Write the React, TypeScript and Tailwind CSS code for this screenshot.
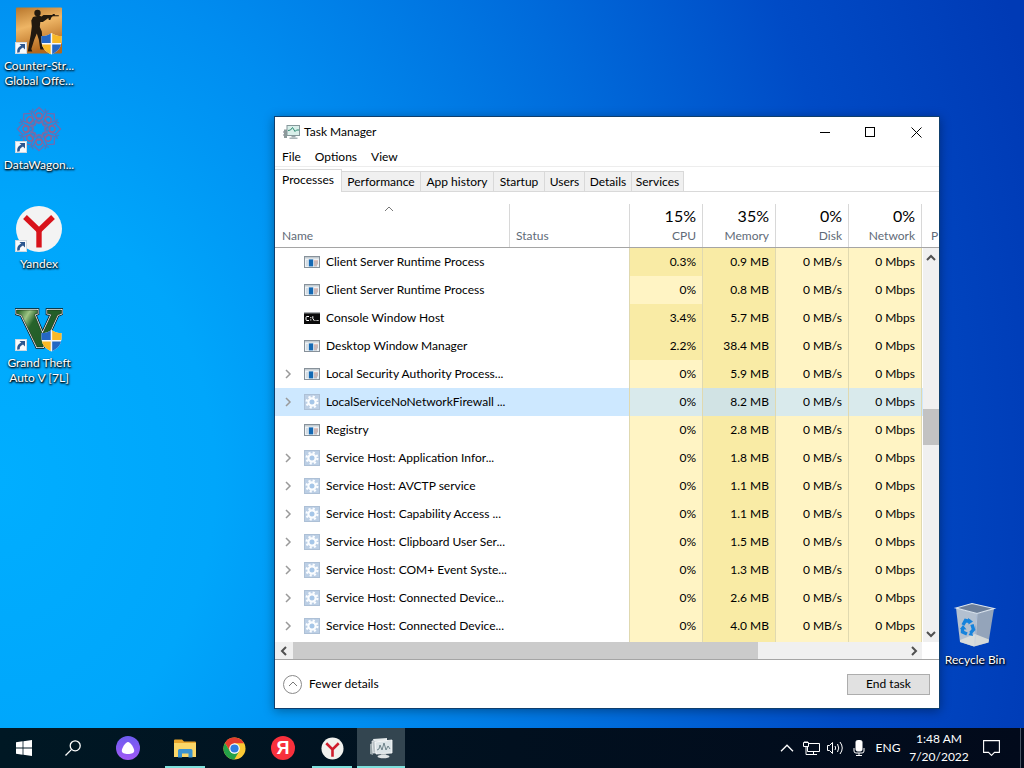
import React from "react";

type IconKind = "app" | "console" | "service";

interface Row {
  name: string;
  icon: IconKind;
  group?: boolean;
  cpu: string;
  memory: string;
  selected?: boolean;
}

const rows: Row[] = [
  { name: "Client Server Runtime Process", icon: "app", cpu: "0.3%", memory: "0.9 MB" },
  { name: "Client Server Runtime Process", icon: "app", cpu: "0%", memory: "0.8 MB" },
  { name: "Console Window Host", icon: "console", cpu: "3.4%", memory: "5.7 MB" },
  { name: "Desktop Window Manager", icon: "app", cpu: "2.2%", memory: "38.4 MB" },
  { name: "Local Security Authority Process...", icon: "app", group: true, cpu: "0%", memory: "5.9 MB" },
  { name: "LocalServiceNoNetworkFirewall ...", icon: "service", group: true, cpu: "0%", memory: "8.2 MB", selected: true },
  { name: "Registry", icon: "app", cpu: "0%", memory: "2.8 MB" },
  { name: "Service Host: Application Infor...", icon: "service", group: true, cpu: "0%", memory: "1.8 MB" },
  { name: "Service Host: AVCTP service", icon: "service", group: true, cpu: "0%", memory: "1.1 MB" },
  { name: "Service Host: Capability Access ...", icon: "service", group: true, cpu: "0%", memory: "1.1 MB" },
  { name: "Service Host: Clipboard User Ser...", icon: "service", group: true, cpu: "0%", memory: "1.5 MB" },
  { name: "Service Host: COM+ Event Syste...", icon: "service", group: true, cpu: "0%", memory: "1.3 MB" },
  { name: "Service Host: Connected Device...", icon: "service", group: true, cpu: "0%", memory: "2.6 MB" },
  { name: "Service Host: Connected Device...", icon: "service", group: true, cpu: "0%", memory: "4.0 MB" },
];

const usage = [
  { label: "CPU", total: "15%" },
  { label: "Memory", total: "35%" },
  { label: "Disk", total: "0%" },
  { label: "Network", total: "0%" },
];

const tabs = [
  { label: "Performance", width: "w-[79px]" },
  { label: "App history", width: "w-[73px]" },
  { label: "Startup", width: "w-[51px]" },
  { label: "Users", width: "w-[40px]" },
  { label: "Details", width: "w-[47px]" },
  { label: "Services", width: "w-[52px]" },
];

function Chevron({ dir, className }: { dir: "up" | "down" | "left" | "right"; className?: string }) {
  const d = {
    up: "M1 7 L5 3 L9 7",
    down: "M1 3 L5 7 L9 3",
    left: "M7 1 L3 5 L7 9",
    right: "M3 1 L7 5 L3 9",
  }[dir];
  return (
    <svg viewBox="0 0 10 10" className={className} fill="none" stroke="currentColor" aria-hidden="true">
      <path d={d} />
    </svg>
  );
}

function ProcessIcon({ kind }: { kind: IconKind }) {
  if (kind === "app")
    return (
      <svg viewBox="0 0 16 14" className="h-[14px] w-4 shrink-0" aria-hidden="true">
        <rect x="0.5" y="1.5" width="15" height="11" fill="#eef2f5" stroke="#87919a" />
        <rect x="1" y="2" width="14" height="1.5" fill="#c3cbd1" />
        <rect x="2" y="5" width="2" height="6" fill="#d5dde4" />
        <rect x="4.8" y="4.4" width="4.4" height="7" fill="#1469b3" />
        <path d="M10 6h4M10 8h4M10 10h3" stroke="#d58a7d" strokeWidth="0.9" />
        <path d="M10 7h4M10 9h4M10 11h3" stroke="#8fa0ac" strokeWidth="0.6" />
      </svg>
    );
  if (kind === "console")
    return (
      <svg viewBox="0 0 16 14" className="h-[14px] w-4 shrink-0" aria-hidden="true">
        <rect x="0" y="1" width="16" height="12" fill="#0a0a0a" />
        <rect x="0" y="1" width="16" height="1.4" fill="#a9acaf" />
        <path
          d="M5 5.500H3Q2 5.500 2 6.500V8.500Q2 9.500 3 9.500H5M6.800 6v1.200M6.800 8.300v1.200M8.800 5.200v2.300l1.600 2.400M11.600 9.500h.9M13.300 9.500h1.200"
          fill="none"
          stroke="#fff"
          strokeWidth="1"
        />
      </svg>
    );
  return (
    <svg viewBox="0 0 16 16" className="size-4 shrink-0" aria-hidden="true">
      <rect width="16" height="16" fill="#bccfe5" />
      <rect x="0.5" y="0.5" width="15" height="15" fill="none" stroke="#adc0d6" />
      <circle cx="8" cy="8" r="5.400" fill="none" stroke="#fbfdff" strokeWidth="2.200" strokeDasharray="2.120 2.120" />
      <circle cx="8" cy="8" r="3.600" fill="none" stroke="#fbfdff" strokeWidth="2.200" />
      <circle cx="8" cy="8" r="2.300" fill="#a5c6e8" />
    </svg>
  );
}

function TaskManagerIcon({ className }: { className: string }) {
  return (
    <svg viewBox="0 0 17 16" className={className} aria-hidden="true">
      <path d="M1 5.500h3V14H1z" fill="#8d9a9b" />
      <path d="M0 8h1M0 11h1" stroke="#778" />
      <rect x="4" y="1.500" width="12.500" height="10" fill="#d9efea" stroke="#86989b" />
      <path d="M5 6.500l2.500-.5 2-2.500 2.500 4 1.500-1.500h2.500" fill="none" stroke="#2f8a72" strokeWidth="1" />
      <path d="M8.500 12h4v1.500h-4z" fill="#9aa7aa" />
      <path d="M6.500 13.500h8v1.500h-8z" fill="#a9b4b8" />
    </svg>
  );
}

function Shield() {
  return (
    <g transform="translate(26,26)">
      <clipPath id="shield-clip">
        <path d="M10.500 0C14 2.500 17 3 20.500 3V8C20.500 15 16 19 10.500 21.500C5 19 .5 15 .5 8V3C4 3 7 2.500 10.500 0z" />
      </clipPath>
      <g clipPath="url(#shield-clip)">
        <rect width="21" height="22" fill="#f5f7fa" />
        <rect width="9.700" height="10" fill="#2467c4" />
        <rect x="11.200" width="10" height="10" fill="#f9b926" />
        <rect y="11.500" width="9.700" height="11" fill="#f9b926" />
        <rect x="11.200" y="11.500" width="10" height="11" fill="#2467c4" />
      </g>
    </g>
  );
}

function ShortcutArrow() {
  return (
    <g>
      <rect x="0.500" y="35.500" width="11" height="11" fill="#f8fafc" stroke="#cfd8e0" />
      <path d="M3.500 45.500C3 42 4.500 40.500 7.500 39.500" fill="none" stroke="#2b568f" strokeWidth="2.600" />
      <path d="M4.500 37h5.500v5.500z" fill="#2b568f" />
    </g>
  );
}

function CounterStrikeIcon() {
  return (
    <svg viewBox="0 0 48 48" className="size-12" aria-hidden="true">
      <defs>
        <linearGradient id="csgo" x1="0" y1="0" x2="0.3" y2="1">
          <stop offset="0" stopColor="#b7762c" />
          <stop offset="0.450" stopColor="#eeb565" />
          <stop offset="1" stopColor="#b3681d" />
        </linearGradient>
      </defs>
      <rect x="1" y="0.500" width="46" height="46" rx="1" fill="url(#csgo)" />
      <circle cx="22.500" cy="6" r="3.200" fill="#21190f" />
      <path
        d="M18 10l6-1.500 2.500 1 2-1.500h9l.3-1h2v1.200h4v1.100h-6l-1.500 1.300-1 2.500h-1.500l-.5-2-2 1.500-3.500 2.500h-2.500l-.5 5 2 4.500.5 7 1 8.500 2 2.400h-5l-1.500-10-2-6-2.500 6-3 9.500 1 2.500h-4.500l1.500-9 1.500-8 1-8-.5-6z"
        fill="#21190f"
      />
      <Shield />
      <ShortcutArrow />
    </svg>
  );
}

function DataWagonIcon() {
  const turns = [0, 45, 90, 135, 180, 225, 270, 315];
  return (
    <svg viewBox="0 0 48 48" className="size-12" aria-hidden="true">
      <g fill="none" strokeWidth="1.300" opacity="0.850">
        {turns.map((a) => (
          <g key={a} transform={`rotate(${a} 24 23)`}>
            <path d="M24 1.500L18.500 6.500L21 12H27L29.500 6.500z" stroke="#8862a0" />
            <path d="M18.500 6.500L14 4.500M29.500 6.500L34 4.500M21 12L24 17L27 12" stroke="#5b72b4" />
            <circle cx="24" cy="10" r="3" stroke="#b0587c" />
            <path d="M20 14.500Q24 20 28 14.500" stroke="#9a5f92" />
          </g>
        ))}
      </g>
      <ShortcutArrow />
    </svg>
  );
}

function YandexDesktopIcon() {
  return (
    <svg viewBox="0 0 48 48" className="size-12" aria-hidden="true">
      <circle cx="24" cy="24" r="23" fill="#f3f3f3" />
      <path d="M10 12L24 25.500L38 12" fill="none" stroke="#d8131b" strokeWidth="5.400" />
      <path d="M24 24V42.500" stroke="#d8131b" strokeWidth="5.400" />
      <ShortcutArrow />
    </svg>
  );
}

const gtaShape = "M1.500 6H22.500V9.500L19.500 10.500L27.500 30L36.500 10.500L32.500 9.500V6H46.500V9.500L42.500 11L28 43H22L6.500 11L1.500 9.500z";

function GtaIcon() {
  return (
    <svg viewBox="0 0 48 48" className="size-12" aria-hidden="true">
      <defs>
        <linearGradient id="gta" x1="0" y1="0" x2="1" y2="0.5">
          <stop offset="0.050" stopColor="#2e6a2c" />
          <stop offset="0.250" stopColor="#9ec584" />
          <stop offset="0.420" stopColor="#27632b" />
          <stop offset="1" stopColor="#1f5a26" />
        </linearGradient>
      </defs>
      <path d={gtaShape} fill="none" stroke="#10160f" strokeWidth="3.600" />
      <path d={gtaShape} fill="none" stroke="#fff" strokeWidth="2" />
      <path d={gtaShape} fill="url(#gta)" stroke="#132413" strokeWidth="0.600" />
      <Shield />
      <ShortcutArrow />
    </svg>
  );
}

function RecycleIcon() {
  return (
    <svg viewBox="0 0 48 48" className="size-12" aria-hidden="true">
      <path d="M5 7L26 12.500L23 45.500L9 41z" fill="#b3c0d0" />
      <path d="M26 12.500L43 7.500L37.500 41.500L23 45.500z" fill="#94a4ba" />
      <path d="M5 7L21 2.500L43 7.500L26 12.500z" fill="#6d7f99" stroke="#dde5ed" strokeWidth="1.200" />
      <path d="M9 39L24 33L38 38.500L37.500 41.500L23 45.500L9 41z" fill="#dcdfdc" opacity="0.9" />
      <path d="M26 12.500L24 45" stroke="#c9d3df" strokeWidth="0.800" />
      <g fill="none" stroke="#1683dc" strokeWidth="3.400">
        <path d="M12 24L14.500 19.500L19 20.500" />
        <path d="M21 23.500L22.500 28.500L19.500 32" />
        <path d="M16 33L11.500 31L11.500 27" />
      </g>
      <path d="M17 17l5 3.500-4.500 3zM22 35l-4.500-1 3-4.500zM9 28l3-4 3.500 4.500z" fill="#1683dc" />
    </svg>
  );
}

function DesktopIcon({ icon, lines }: { icon: React.ReactNode; lines: string[] }) {
  return (
    <a
      href="#"
      className="flex h-[99px] w-[78px] flex-col items-center text-center text-xs leading-[15px] whitespace-nowrap text-white [text-shadow:0_1px_2px_#000,1px_1px_2px_#000]"
    >
      {icon}
      <span className="pt-[3px]">
        {lines.map((l) => (
          <span key={l} className="block">
            {l}
          </span>
        ))}
      </span>
    </a>
  );
}

function TaskButton({
  label,
  open,
  active,
  children,
}: {
  label: string;
  open?: boolean;
  active?: boolean;
  children: React.ReactNode;
}) {
  return (
    <button
      type="button"
      aria-label={label}
      className={`relative flex h-10 w-12 items-center justify-center ${active ? "bg-[#334550]" : ""}`}
    >
      {children}
      {open && <span className={`absolute bottom-0 h-0.5 bg-[#7ee0dc] ${active ? "inset-x-0" : "inset-x-1"}`} />}
    </button>
  );
}

function Taskbar() {
  return (
    <footer className="flex h-10 shrink-0 items-center justify-between bg-linear-to-r from-[#001824] via-[#01101f] to-[#020a1b] text-white">
      <nav className="flex items-center gap-px" aria-label="Taskbar">
        <TaskButton label="Start">
          <svg viewBox="0 0 16 16" className="size-4" fill="#fff" aria-hidden="true">
            <path d="M0 2.200L6.600 1.300V7.600H0zM7.400 1.200L16 0V7.600H7.400zM0 8.400H6.600V14.700L0 13.800zM7.400 8.400H16V16L7.400 14.800z" />
          </svg>
        </TaskButton>
        <TaskButton label="Search">
          <svg viewBox="0 0 16 16" className="size-4" fill="none" stroke="#fff" strokeWidth="1.300" aria-hidden="true">
            <circle cx="10.200" cy="5.800" r="5" />
            <path d="M6.600 9.400L0.500 15.500" />
          </svg>
        </TaskButton>
        <span className="w-[5px]" />
        <TaskButton label="Alice">
          <svg viewBox="0 0 24 24" className="size-6" aria-hidden="true">
            <defs>
              <linearGradient id="alice" x1="0" y1="0" x2="0" y2="1">
                <stop offset="0" stopColor="#6c5cf0" />
                <stop offset="1" stopColor="#a159f5" />
              </linearGradient>
            </defs>
            <circle cx="12" cy="12" r="12" fill="url(#alice)" />
            <path d="M12 6c-2.300 0-6.200 6-6.200 8.800C5.800 17 8.500 18 12 18s6.200-1 6.200-3.200C18.200 12 14.300 6 12 6z" fill="#fff" />
          </svg>
        </TaskButton>
        <span className="w-[7px]" />
        <TaskButton label="File Explorer" open>
          <svg viewBox="0 0 22 19" className="h-[19px] w-[22px]" aria-hidden="true">
            <path d="M0 1.500Q0 .5 1 .5H8L10 2.500H21Q22 2.500 22 3.500V18H0z" fill="#e8a52c" />
            <path d="M0 4H22V18H0z" fill="#fbd768" />
            <path d="M4 11.500Q4 10 5.500 10H17Q18.500 10 18.500 11.500V18.500H14.500V14.500H8V18.500H4z" fill="#3b93cf" />
          </svg>
        </TaskButton>
        <TaskButton label="Google Chrome">
          <svg viewBox="0 0 24 24" className="size-[23px]" aria-hidden="true">
            <circle cx="12" cy="12" r="11.500" fill="#fcc934" />
            <path d="M2.040 6.250A11.500 11.500 0 0 1 21.960 6.500H12L7.200 14.700z" fill="#e33b2e" />
            <path d="M2.040 6.250L7.240 14.750L12 17.500L16.760 14.750L11.800 23.500A11.500 11.500 0 0 1 2.040 6.250z" fill="#24a148" />
            <circle cx="12" cy="12" r="5.500" fill="#fff" />
            <circle cx="12" cy="12" r="4.300" fill="#2f7de1" />
          </svg>
        </TaskButton>
        <TaskButton label="Yandex">
          <span className="flex size-6 items-center justify-center rounded-full bg-[#f8303c] font-['Liberation_Sans',sans-serif] text-lg leading-6 font-bold">
            Я
          </span>
        </TaskButton>
        <TaskButton label="Yandex Browser" open>
          <svg viewBox="0 0 24 24" className="size-[23px]" aria-hidden="true">
            <circle cx="12" cy="12" r="11.500" fill="#f1f1ee" />
            <path d="M5.500 6.500L12 13L18.500 6.500M12 12V20.500" fill="none" stroke="#cf1c2c" strokeWidth="2.700" />
          </svg>
        </TaskButton>
        <TaskButton label="Task Manager" open active>
          <svg viewBox="0 0 24 22" className="h-[22px] w-6" aria-hidden="true">
            <path d="M1 7l3-1v12l-3-1z" fill="#9aa6aa" />
            <path d="M4 2l14-1v3l-13 1z" fill="#e1e6e8" />
            <path d="M3 4l15-1v12l-14 1z" fill="#b8c1c5" stroke="#edf1f2" strokeWidth="0.800" />
            <path d="M6 5l17-2v13l-16 1z" fill="#dce4e7" stroke="#fff" strokeWidth="0.800" />
            <path d="M8 13l2-1 1-4 2 5 2-7 2 7 2-4 2 3" fill="none" stroke="#61777f" strokeWidth="0.900" />
            <path d="M12 17h5l1 2h-7z" fill="#aab3b6" />
            <ellipse cx="14.500" cy="19.500" rx="6" ry="1.800" fill="#e0e4e5" />
          </svg>
        </TaskButton>
      </nav>
      <div className="flex h-full items-center text-xs">
        <button type="button" aria-label="Show hidden icons" className="flex w-6 justify-center">
          <svg viewBox="0 0 14 8" className="h-2 w-[14px]" fill="none" stroke="#fff" strokeWidth="1.300" aria-hidden="true">
            <path d="M1 7.200L7 1.200L13 7.200" />
          </svg>
        </button>
        <button type="button" aria-label="Network" className="flex w-6 justify-center">
          <svg viewBox="0 0 17 15" className="h-[15px] w-[17px]" fill="none" stroke="#fff" aria-hidden="true">
            <path d="M5.500 2.500H16.500V10.500H4.500V6M10.500 10.500V13.500M7 13.500H14" />
            <path d="M.5 1.500H5.500V5.500H.5zM2 0V1.500M4 0V1.500M3 5.500V13.500H7" />
          </svg>
        </button>
        <button type="button" aria-label="Volume" className="flex w-6 justify-center">
          <svg viewBox="0 0 17 14" className="h-[14px] w-[17px]" fill="none" stroke="#fff" aria-hidden="true">
            <path d="M.5 4.500H2.500L5.500 1.500V12.500L2.500 9.500H.5z" />
            <path d="M8 5Q9.300 7 8 9M10.500 3Q13 7 10.500 11M13 1Q17.500 7 13 13" />
          </svg>
        </button>
        <button type="button" aria-label="Microphone" className="flex w-6 justify-center">
          <svg viewBox="0 0 12 16" className="h-4 w-3" fill="none" stroke="#fff" aria-hidden="true">
            <rect x="3" y="0.500" width="6" height="10.500" rx="1.500" fill="#fff" />
            <path d="M1 8V11Q1 13 3 13H9Q11 13 11 11V8M6 13V15.500M3 15.500H9" />
          </svg>
        </button>
        <button type="button" className="w-[34px] text-center">
          ENG
        </button>
        <button type="button" className="w-[68px] text-center leading-[18px]">
          <span className="block">1:48 AM</span>
          <span className="block">7/20/2022</span>
        </button>
        <button type="button" aria-label="Notifications" className="flex w-9 justify-center">
          <svg viewBox="0 0 17 16" className="h-4 w-[17px]" fill="none" stroke="#fff" strokeWidth="1.100" aria-hidden="true">
            <path d="M.6 .6H16.400V12.400H11.500L8.500 15.400L5.500 12.400H.6z" />
          </svg>
        </button>
        <button type="button" aria-label="Show desktop" className="ml-[11px] h-full w-1 border-l border-[#4a5563]" />
      </div>
    </footer>
  );
}

function ProcessTable() {
  const headCell = "border-b border-[#a5a5a5] p-0 align-bottom font-normal";
  const rule = "border-r border-[#d8d8d8]";
  const heat = "border-r border-[#e0d9b0] p-0";
  return (
    <table className="w-full table-fixed border-separate border-spacing-0">
      <colgroup>
        <col className="w-[235px]" />
        <col className="w-[120px]" />
        <col className="w-[73px]" />
        <col className="w-[73px]" />
        <col className="w-[73px]" />
        <col className="w-[73px]" />
        <col />
      </colgroup>
      <thead>
        <tr className="h-14 text-[#5f6b78]">
          <th className={`text-left ${headCell}`}>
            <div className={`flex h-[43px] flex-col justify-between pb-0.5 pl-[7px] ${rule}`}>
              <Chevron dir="up" className="ml-[102px] size-[10px] text-[#777]" />
              <span className="leading-[18px]">Name</span>
            </div>
          </th>
          <th className={`text-left ${headCell}`}>
            <div className={`flex h-[43px] flex-col justify-end pb-0.5 pl-1.5 ${rule}`}>
              <span className="leading-[18px]">Status</span>
            </div>
          </th>
          {usage.map((u) => (
            <th key={u.label} className={`text-right ${headCell}`}>
              <div className={`flex h-[43px] flex-col justify-end pr-1.5 pb-0.5 ${rule}`}>
                <span className="text-base leading-[22px] text-black">{u.total}</span>
                <span className="leading-[18px]">{u.label}</span>
              </div>
            </th>
          ))}
          <th className={`overflow-hidden text-left ${headCell}`}>
            <div className="pb-0.5 pl-[9px] leading-[18px]">P</div>
          </th>
        </tr>
      </thead>
      <tbody>
        {rows.map((r, i) => {
          const soft = r.selected ? "bg-[#d9eaec]" : "bg-[#fff4c4]";
          const strong = r.selected ? "bg-[#d1e3e4]" : "bg-[#f9eba5]";
          return (
            <tr key={i} className={`h-7 ${r.selected ? "bg-[#cde8ff]" : ""}`}>
              <td className="p-0">
                <div className="flex items-center pl-2">
                  <span className="flex w-[21px] shrink-0">
                    {r.group && <Chevron dir="right" className="size-[10px] stroke-[1.5] text-[#9a9a9a]" />}
                  </span>
                  <ProcessIcon kind={r.icon} />
                  <span className="pl-1.5 whitespace-nowrap">{r.name}</span>
                </div>
              </td>
              <td className={heat} />
              <td className={`pr-1.5! text-right ${heat} ${r.cpu !== "0%" ? strong : soft}`}>{r.cpu}</td>
              <td className={`pr-1.5! text-right ${heat} ${strong}`}>{r.memory}</td>
              <td className={`pr-1.5! text-right ${heat} ${soft}`}>0 MB/s</td>
              <td className={`pr-1.5! text-right ${heat} ${soft}`}>0 Mbps</td>
              <td className="p-0" />
            </tr>
          );
        })}
        <tr className="h-0.5">
          <td className="p-0" />
          <td className={heat} />
          <td className={`${heat} bg-[#fff4c4]`} />
          <td className={`${heat} bg-[#f9eba5]`} />
          <td className={`${heat} bg-[#fff4c4]`} />
          <td className={`${heat} bg-[#fff4c4]`} />
          <td className="p-0" />
        </tr>
      </tbody>
    </table>
  );
}

function TaskManager() {
  return (
    <section className="flex w-[666px] flex-col border border-[#0f3f6e] bg-white text-xs text-black shadow-[0_2px_10px_rgba(0,0,0,0.35)]">
      <header className="flex h-[30px] items-center">
        <TaskManagerIcon className="ml-2 h-4 w-[17px]" />
        <h1 className="ml-1 flex-1">Task Manager</h1>
        <button type="button" aria-label="Minimize" className="flex h-[29px] w-[45px] items-center justify-center">
          <span className="h-px w-[10px] bg-black" />
        </button>
        <button type="button" aria-label="Maximize" className="flex h-[29px] w-[46px] items-center justify-center">
          <span className="size-[10px] border border-black" />
        </button>
        <button type="button" aria-label="Close" className="flex h-[29px] w-[46px] items-center justify-center">
          <svg viewBox="0 0 11 11" className="size-[11px]" stroke="#000" aria-hidden="true">
            <path d="M.5 .5L10.500 10.500M10.500 .5L.5 10.500" />
          </svg>
        </button>
      </header>

      <nav className="flex h-5 items-center gap-[14px] border-b border-[#ededed] px-[7px]" aria-label="Menu">
        <button type="button">File</button>
        <button type="button">Options</button>
        <button type="button">View</button>
      </nav>

      <div className="flex h-[25px] items-end" role="tablist">
        <button type="button" role="tab" aria-selected="true" className="h-[23px] w-[67px] border-t border-r border-[#d9d9d9] pb-0.5">
          Processes
        </button>
        <div className="flex h-full flex-1 items-end border-b border-[#d9d9d9]">
          {tabs.map((t) => (
            <button
              key={t.label}
              type="button"
              role="tab"
              aria-selected="false"
              className={`h-5 border-t border-r border-[#d9d9d9] bg-[#f0f0f0] text-center whitespace-nowrap ${t.width}`}
            >
              {t.label}
            </button>
          ))}
        </div>
      </div>

      <div className="relative">
        <ProcessTable />
        <div className="absolute top-14 right-0 bottom-0 flex w-4 flex-col bg-[#f0f0f0]">
          <button type="button" aria-label="Scroll up" className="flex h-[19px] items-center justify-center">
            <Chevron dir="up" className="size-[10px] stroke-2 text-[#505050]" />
          </button>
          <span className="mt-[142px] mb-auto h-9 w-full bg-[#c2c2c2]" />
          <button type="button" aria-label="Scroll down" className="flex h-[17px] items-center justify-center">
            <Chevron dir="down" className="size-[10px] stroke-2 text-[#505050]" />
          </button>
        </div>
      </div>

      <div className="flex h-[18px] border-b border-[#a5a5a5] pr-[17px]">
        <div className="flex flex-1 bg-[#f0f0f0]">
          <button type="button" aria-label="Scroll left" className="flex w-[18px] items-center justify-center">
            <Chevron dir="left" className="size-[10px] stroke-2 text-[#505050]" />
          </button>
          <div className="flex-1">
            <div className="h-full w-[76%] bg-[#cbcbcb]" />
          </div>
          <button type="button" aria-label="Scroll right" className="flex w-[17px] items-center justify-center">
            <Chevron dir="right" className="size-[10px] stroke-2 text-[#505050]" />
          </button>
        </div>
      </div>

      <footer className="flex h-12 items-center justify-between pr-[9px] pl-2">
        <button type="button" className="flex items-center gap-[7px]">
          <span className="flex size-[19px] items-center justify-center rounded-full border border-[#8a8a8a]">
            <Chevron dir="up" className="size-[10px] text-[#777]" />
          </span>
          Fewer details
        </button>
        <button type="button" className="h-[21px] w-[83px] border border-[#adadad] bg-[#e1e1e1]">
          End task
        </button>
      </footer>
    </section>
  );
}

export default function App() {
  return (
    <div className="flex h-screen flex-col overflow-hidden font-['Lato',sans-serif]">
      <main className="relative flex-1 bg-[radial-gradient(ellipse_105%_190%_at_0%_66%,#00aeff_0%,#00a6fb_20%,#008df0_38%,#006bdb_60%,#004bc6_80%,#003ab5_100%)]">
        <div className="flex flex-col pt-[7px]">
          <DesktopIcon icon={<CounterStrikeIcon />} lines={["Counter-Str...", "Global Offe..."]} />
          <DesktopIcon icon={<DataWagonIcon />} lines={["DataWagon..."]} />
          <DesktopIcon icon={<YandexDesktopIcon />} lines={["Yandex"]} />
          <DesktopIcon icon={<GtaIcon />} lines={["Grand Theft", "Auto V [7L]"]} />
        </div>
        <div className="absolute top-[601px] left-[936px]">
          <DesktopIcon icon={<RecycleIcon />} lines={["Recycle Bin"]} />
        </div>
        <div className="absolute top-[116px] left-[274px]">
          <TaskManager />
        </div>
      </main>
      <Taskbar />
    </div>
  );
}
